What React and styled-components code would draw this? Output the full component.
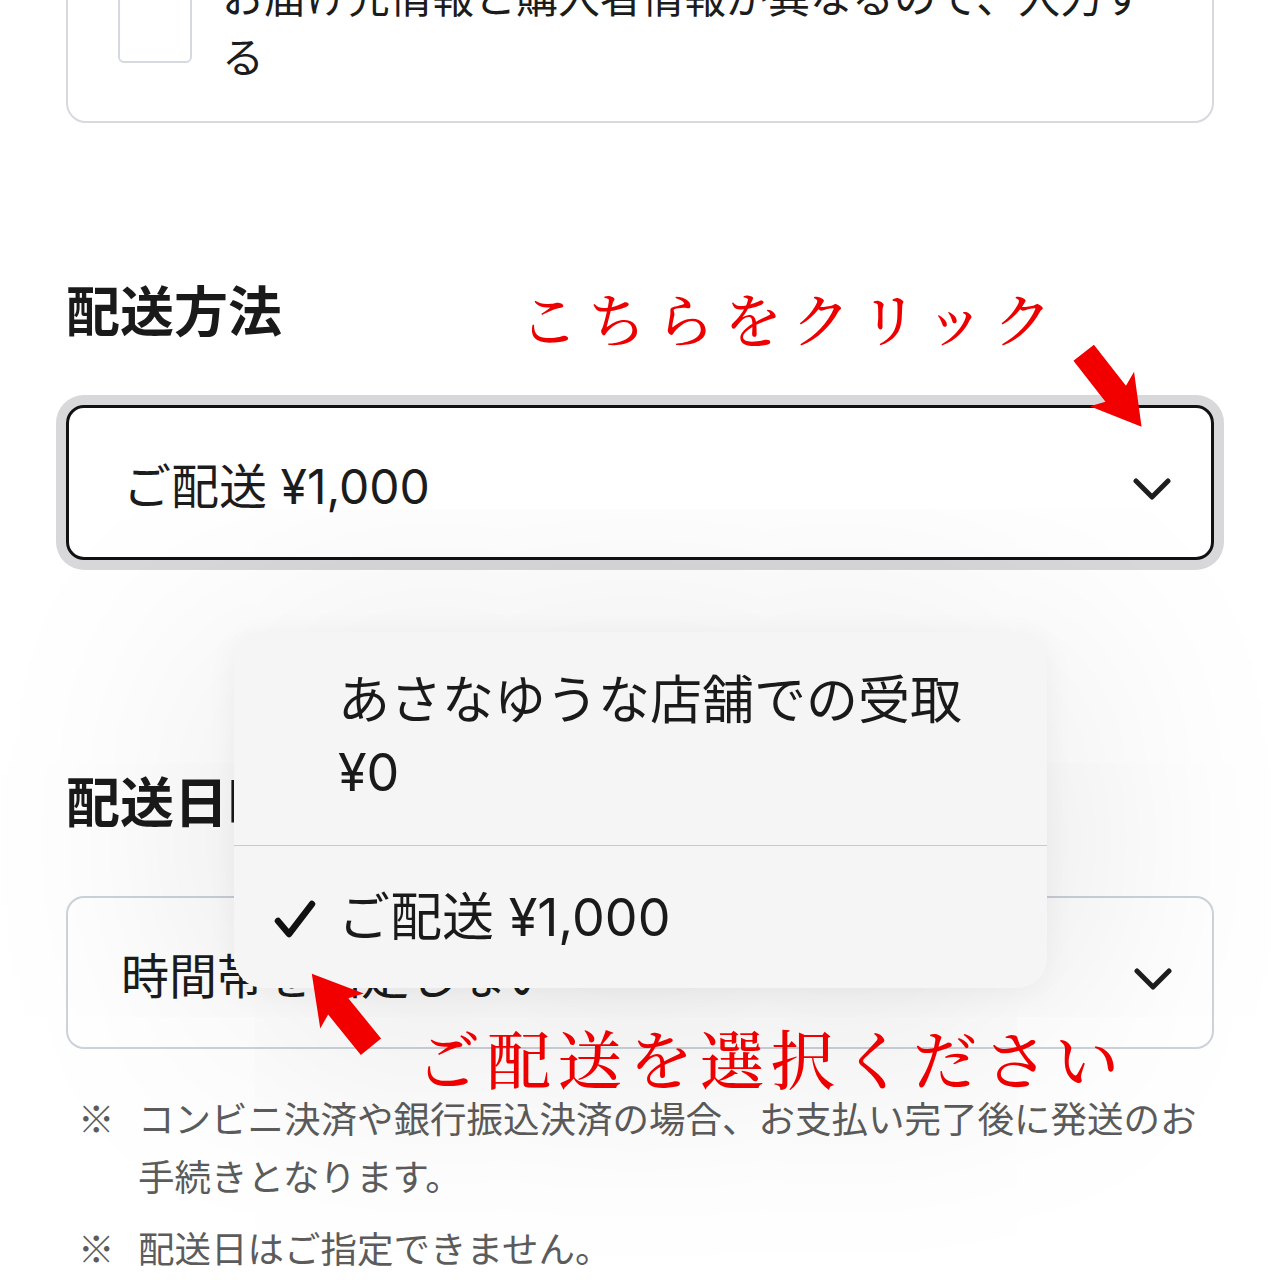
import React from 'react';
import styled, { createGlobalStyle } from 'styled-components';

const GlobalStyle = createGlobalStyle`
  html, body {
    margin: 0;
    background: #ffffff;
  }
  body {
    font-family: "Noto Sans CJK JP", "Noto Sans", sans-serif;
    color: #1f1f1f;
  }
  * {
    box-sizing: border-box;
  }
`;

const Page = styled.div`
  position: relative;
  width: 1280px;
  height: 1280px;
  overflow: hidden;
  padding: 0 66px;
  display: flex;
  flex-direction: column;
`;

const AddressCard = styled.div`
  margin-top: -70px;
  display: flex;
  align-items: flex-start;
  gap: 30px;
  padding: 33px 50px 36px;
  background: #fff;
  border: 2px solid #d6d9e0;
  border-radius: 20px;
`;

const CheckBox = styled.div`
  flex: none;
  width: 74px;
  height: 74px;
  margin-top: 24px;
  border: 2px solid #d6d9e0;
  border-radius: 6px;
  background: #fff;
`;

const CardText = styled.div`
  flex: 1;
  font-size: 42px;
  line-height: 60px;
  color: #1c1c1c;
`;

const Section = styled.section`
  margin-top: ${(p) => p.$gap}px;
`;

const Label = styled.h2`
  margin: 0;
  font-size: 54px;
  line-height: 72px;
  font-weight: 700;
  color: #1a1a1a;
`;

const SelectBox = styled.div`
  margin-top: 60px;
  height: ${(p) => (p.$focused ? 155 : 153)}px;
  display: flex;
  align-items: center;
  justify-content: space-between;
  padding: 0 40px 0 ${(p) => (p.$focused ? 54 : 53)}px;
  border: ${(p) => (p.$focused ? '3px solid #111' : '2px solid #cdd2db')};
  border-radius: 18px;
  box-shadow: ${(p) => (p.$focused ? '0 0 0 10px #d8d8da' : 'none')};
  font-family: Inter, "Noto Sans CJK JP", sans-serif;
  font-size: 48px;
  color: #1c1c1c;
  svg {
    margin-top: 12px;
  }
`;

const Chevron = () => (
  <svg width="38" height="24" viewBox="0 0 38 24">
    <polyline points="3,4 19,20 35,4" fill="none" stroke="#1e1e1e" strokeWidth="5" strokeLinecap="round" strokeLinejoin="round" />
  </svg>
);

const Notes = styled.div`
  margin-top: 40px;
  display: flex;
  flex-direction: column;
  gap: 14px;
`;

const Note = styled.div`
  display: grid;
  grid-template-columns: 72px 1fr;
  font-size: 36.5px;
  line-height: 58px;
  color: #5c5c5c;
`;

const Mark = styled.span`
  padding-left: 12px;
`;

const Menu = styled.div`
  position: absolute;
  left: 234px;
  top: 632px;
  width: 813px;
  border-radius: 30px;
  background: #f5f5f5;
  box-shadow: 0 30px 300px rgba(0, 0, 0, 0.15), 0 4px 30px rgba(0, 0, 0, 0.05);
  overflow: hidden;
`;

const MenuItem = styled.div`
  position: relative;
  display: flex;
  align-items: flex-start;
  padding: ${(p) => (p.$last ? '36px 60px 34px 104px' : '33px 60px 36px 104px')};
  font-family: Inter, "Noto Sans CJK JP", sans-serif;
  font-size: 52px;
  line-height: 72px;
  color: #1a1a1a;
  & + & {
    border-top: 1.5px solid #c9c9cb;
  }
`;

const CheckMark = styled.svg`
  position: absolute;
  left: 40px;
  top: 53px;
`;

const Callout = styled.div`
  position: absolute;
  left: ${(p) => p.$x}px;
  top: ${(p) => p.$y}px;
  font-family: "Noto Serif CJK JP", "Noto Sans CJK JP", serif;
  font-weight: 500;
  font-size: ${(p) => p.$size}px;
  letter-spacing: ${(p) => p.$spacing}px;
  line-height: 1;
  color: #ee0000;
  white-space: nowrap;
`;

const ArrowSvg = styled.svg`
  position: absolute;
  left: ${(p) => p.$x}px;
  top: ${(p) => p.$y}px;
  transform: rotate(${(p) => p.$angle}deg);
`;

const Arrow = ({ x, y, angle }) => (
  <ArrowSvg $x={x} $y={y} $angle={angle} width="100" height="60" viewBox="0 0 100 60">
    <polygon points="4,17 56,17 50,2 98,30 50,58 56,43 4,43" fill="#f20000" />
  </ArrowSvg>
);

export default function App() {
  return (
    <>
      <GlobalStyle />
      <Page>
        <AddressCard>
          <CheckBox />
          <CardText>お届け先情報と購入者情報が異なるので、入力する</CardText>
        </AddressCard>

        <Section $gap={150}>
          <Label>配送方法</Label>
          <SelectBox $focused>
            <span>ご配送 ¥1,000</span>
            <Chevron />
          </SelectBox>
        </Section>

        <Section $gap={204}>
          <Label>配送日時</Label>
          <SelectBox>
            <span>時間帯を指定しない</span>
            <Chevron />
          </SelectBox>
        </Section>

        <Notes>
          <Note>
            <Mark>※</Mark>
            <span>コンビニ決済や銀行振込決済の場合、お支払い完了後に発送のお手続きとなります。</span>
          </Note>
          <Note>
            <Mark>※</Mark>
            <span>配送日はご指定できません。</span>
          </Note>
        </Notes>

        <Menu>
          <MenuItem>あさなゆうな店舗での受取 ¥0</MenuItem>
          <MenuItem $last>
            <CheckMark width="42" height="40" viewBox="0 0 42 40">
              <path d="M4 22 L15 35 L38 5" fill="none" stroke="#111" strokeWidth="6.5" strokeLinecap="round" strokeLinejoin="round" />
            </CheckMark>
            ご配送 ¥1,000
          </MenuItem>
        </Menu>

        <Callout $x={520} $y={288} $size={58} $spacing={10}>こちらをクリック</Callout>
        <Callout $x={416} $y={1024} $size={64} $spacing={7}>ご配送を選択ください</Callout>
        <Arrow x={1062} y={359} angle={52} />
        <Arrow x={292} y={981} angle={231} />
      </Page>
    </>
  );
}
